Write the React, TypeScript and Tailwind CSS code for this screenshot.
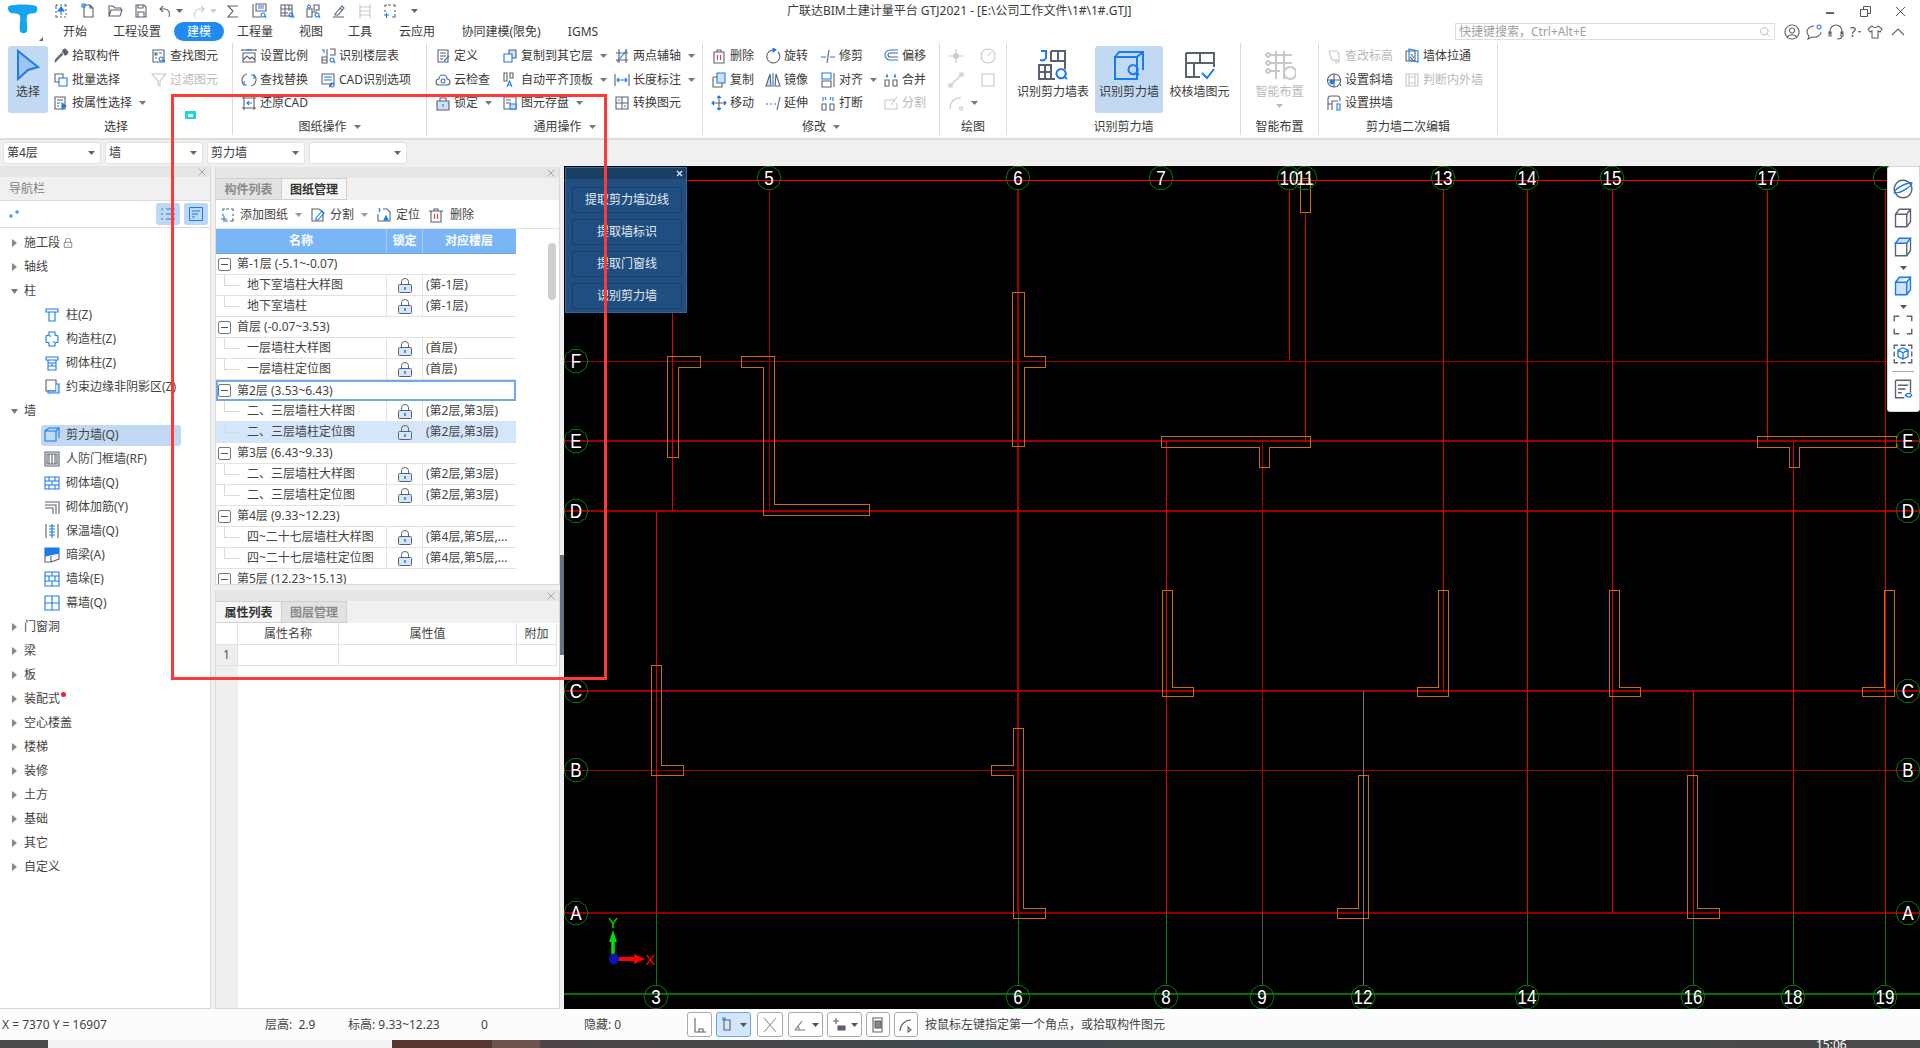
import React from 'react';

const S = '#5a6170';
const B = '#1b7be8';
const D = '#c6c8cc';
const L = '#cfe2f9';

type Seg = [string, string?, string?];
const ICONS: Record<string, Seg[]> = {
  qup: [['M3 2h2M7 2h2M11 2h2v2M13 6v2M13 10v2M13 14h-2M9 14H7M5 14H3v-2M3 10V8M3 6V4V2'], ['M8 12V6', B], ['M5 8l3-4 3 4z', B, B]],
  qnew: [['M4 2h6l3 3v9H4zM10 2v3h3'], ['M2 1h3v3H2z', B]],
  qopen: [['M2 13V3h4l2 2h6v2M2 13l2-6h11l-2 6z']],
  qsave: [['M3 2h8l2 2v10H3zM5 2v3h5V2M5 14V9h6v5']],
  undo: [['M12 14c2-4-1-8-4-8H3M6 3L3 6l3 3']],
  redo: [['M4 14c-2-4 1-8 4-8h5M10 3l3 3-3 3', D]],
  sum: [['M13 3H3l5 5-5 6h10']],
  qt1: [['M2 1v13h8M5 1h10v7H5z'], ['M7 3h6M7 5h6', B], ['M12 10a2 2 0 1 0 .1 0M14 13l1 2', B]],
  qt2: [['M2 2h11v11H2zM2 6h11M2 10h7M6 2v11M10 2v6'], ['M12 10a2 2 0 1 0 .1 0M14 13l1 2', B]],
  qt3: [['M2 6h5v8H2zM7 9h5M9 2h5v5H9z'], ['M12 10a2 2 0 1 0 .1 0M14 13l1 2', B], ['M4 2a1.5 1.5 0 1 0 .1 0', B]],
  qpen: [['M1 14h11M3 11l7-8 2 2-6 7H3z'], ['M8 5l2 2', B]],
  qgrid: [['M3 1v14M13 1v14M3 4h10M3 8h10M3 12h10', D]],
  qadd: [['M5 2H3v2M3 7v2M11 2h2v2M13 7v2M6 2h3M10 14h3v-3'], ['M2 12h5M4.500 10v5', B]],
  pick: [['M10 6l-7 7-1 1 1-3 6-6M9 3l4 4'], ['M10 2l2-1 3 3-1 2-2 1z', S, S]],
  batch: [['M2 2h8v8H2z'], ['M6 6h8v8H6z', B, '#fff']],
  prop: [['M2 2h10v12H2zM4 5h6M4 8h3M4 11h2'], ['M9 8v6l4-3z', B, B]],
  findel: [['M2 2h11v12H2zM4 5h2v2H4zM8 5h3M4 10h2'], ['M10 9a2 2 0 1 0 .1 0M12 12l2 2', B]],
  filter: [['M1 2h14L9 9v5l-2-1V9z', D]],
  scale: [['M1 2h14M1 1v2M15 1v2M2 5h12v9H2zM2 12l4-4 3 3 2-2 3 3'], ['M5 2h6', B]],
  floor: [['M2 9h5v6H2zM7 12H2M7 9V1M10 1h5v6h-5'], ['M2 2h2v3', B], ['M12 10a2 2 0 1 0 .1 0M14 13l1 2', B]],
  replace: [['M6 2A6.500 6.500 0 0 0 3 13M10 14A6.500 6.500 0 0 0 13 3'], ['M3 9v4h3M13 7V3h-3', B]],
  cad: [['M2 2h12v10H2zM9 15l3-3'], ['M4 5h8M4 8h8', B], ['M12 11a2 2 0 1 0 .1 0', B]],
  restore: [['M1 3h14M1 13h14M3 1v14M13 1v14'], ['M11 8H6M8 6L6 8l2 2', B]],
  def: [['M3 2h10v12H3zM5 5h6M5 8h6M5 11h3'], ['M9 13l5-5', B]],
  cloud: [['M4 13a3 3 0 0 1 0-6 4 4 0 0 1 8 0 3 3 0 0 1 0 6z'], ['M8 7a2 2 0 1 0 .1 0', B]],
  lock2: [['M5 6V3h6v3'], ['M2 6h12v9H2z', S, L], ['M8 9v3', B]],
  copyto: [['M7 2h7v8H7z', S, L], ['M2 6h8v8H2z', B, '#fff']],
  align: [['M2 1h3v8H2zM8 1h3v5H8z'], ['M5 15l2.500-6 2.500 6M6 13h3', B]],
  store: [['M2 2h12v12H2zM4 5h5M4 8h5'], ['M8 9h6v5H8z', B, L]],
  axis: [['M2 5h12M2 12h12M5 1v14M12 1v14'], ['M3 14L13 2', B]],
  len: [['M1 2v12M15 2v12'], ['M3 8h10M5 6L3 8l2 2M11 6l2 2-2 2', B]],
  conv: [['M2 2h12v12H2zM8 2v12M2 8h12'], ['M4 5l2 0M10 11l2 0', B]],
  del: [['M3 4h10v11H3zM6 4V2h4v2'], ['M6.500 7v5M9.500 7v5', '#e33']],
  rot: [['M8 2a6.500 6.500 0 1 0 5 2'], ['M8 0v4l3-2z', B, B]],
  trim: [['M1 9h5M10 9h5', B], ['M7 15L9 2']],
  off: [['M15 2H7a5 5 0 0 0 0 10h8', B], ['M15 5H7a2 2 0 0 0 0 4h8']],
  copy: [['M6 1h8v10H6z', B, L], ['M2 5h4M2 5v10h9v-4']],
  mir: [['M5 2L1 14h5z', S, L], ['M11 2l4 12h-5z', S], ['M8 1v14', B]],
  alignb: [['M2 1h9v6H2z', B], ['M2 9h9v6H2z', S], ['M14 1v14']],
  merge: [['M2 8h4v6H2zM10 8h4v6h-4z'], ['M4 2v3M3 4l1 1 1-1M12 2v3M11 4l1 1 1-1', B]],
  move: [['M8 2v12M2 8h12'], ['M6 3l2-2 2 2M6 13l2 2 2-2M3 6L1 8l2 2M13 6l2 2-2 2', B, B]],
  ext: [['M1 9h2M5 9h2M9 9h2', B], ['M12 15l3-13']],
  brk: [['M2 9h4v6H2zM10 9h4v6h-4z'], ['M3 2v4M6 5l-1-3M13 2v4M10 5l1-3', B]],
  split: [['M2 5h9M2 5v9h12V8M8 10l6-8', D]],
  dp: [['M8 1v14M1 8h14', D], ['M6 6h4v4H6z', D, D]],
  dc: [['M8 1a7 7 0 1 0 .1 0M8 8l3-4', D]],
  dl: [['M2 14L14 2', D], ['M1 12h3v3H1zM12 1h3v3h-3z', D]],
  dr: [['M2 2h12v12H2z', D]],
  da: [['M2 14C2 7 7 2 13 3', D], ['M13 12a1.500 1.500 0 1 0 .1 0', D]],
  cel: [['M3 3l8 0 2 3v8M3 3l3 9h6', D], ['M11 12a1.500 1.500 0 1 0 .1 0', D]],
  pull: [['M2 3h9v10H2z'], ['M5 1l9 2v11l-9-2z', B], ['M7 6l3 4M6 9l3 3', S]],
  slope: [['M8 2a6.500 6.500 0 1 0 .1 0M1.500 8h13M8 2v13'], ['M6 8a2 2 0 1 0 .1 0', B, B], ['M14 12l1 2', B]],
  inout: [['M2 2h12v12H2zM5 2v12M11 2v12M5 5h6M5 11h6', D]],
  arch: [['M2 15V4a3 3 0 0 1 3-3h6a3 3 0 0 1 3 3v2M2 9h4M6 15V6h6'], ['M11 9h3v6h-3z', B]],
  col1: [['M2 2h12v3H2zM5 5v9h6V5', B]],
  col2: [['M5 1h6v3l3 1v6l-3 1v3H5v-3l-3-1V5l3-1z', B], ['M5 5h2M9 11h2', B]],
  col3: [['M2 2h12v3H2zM4 5v10h8V5M4 8h8M4 11h8M8 8v3', B]],
  edge: [['M2 1h10v11H2z'], ['M12 5h3v9H4v-2h8', B, L]],
  wall: [['M5 1h10v10M1 4h11v10H1z', B], ['M1 4l4-3M12 4l3-3', B]],
  def2: [['M1 1h14v14H1zM5 3v10M8 3v10M11 3v10M3 3h10v10H3z']],
  brick: [['M1 2h14v12H1zM1 6h14M1 10h14M5 2v4M11 2v4M8 6v4M5 10v4M11 10v4', B]],
  rebar: [['M1 3h14v12M1 6h11v9M1 9h8v6']],
  ins: [['M2 1v14M14 1v14'], ['M5 3h6M5 6h6M5 9h6M5 12h6M8 1v14', B]],
  beam: [['M1 1h14v5L1 9z', B, B], ['M1 9v6h6l8-3V6M7 9v6']],
  buttr: [['M1 1h14v14H1zM8 1v4M1 5h14M5 5v5M1 10h14M11 5v5M8 10v5', B]],
  curtain: [['M1 1h14v14H1zM8 1v14M1 8h14M1 1', B]],
  padd: [['M5 2H3v2M3 7v2M11 2h2v2M13 7v2M6 2h3M10 14h3v-3M5 14h3'], ['M1 12h6M4 9v6', B]],
  psplit: [['M2 2h7l4 3v9H2z'], ['M6 11l6-7 2 2-6 7H6z', B]],
  ploc: [['M7 2h4l3 3v9H2V7'], ['M3 1l1 2-1 2M10 9l2 4H8z', B, B]],
  pdel: [['M3 4h10v11H3zM6 4V2h4v2M1 4h14'], ['M6.500 7v5M9.500 7v5', '#e33']],
  locknav: [['M4 7V4a4 4 0 0 1 8 0v3M2 7h12v8H2zM8 10v2']],
  search: [['M7 2a5 5 0 1 0 .1 0M11 11l3 3', '#aaa']],
  user: [['M8 1a7 7 0 1 0 .1 0M8 4a2.500 2.500 0 1 0 .1 0M3.500 13c1-3 8-3 9 0']],
  chat: [['M8 2C4 2 1 5 1 8c0 2 1 3 2 4l-1 3 4-2c5 1 9-2 9-5M5 8h.1M8 8h.1M11 8h.1'], ['M13 1a2 2 0 1 0 .1 0', B]],
  head: [['M2 10V7a6 6 0 0 1 12 0v3M1 8h2v4H1zM13 8h2v4h-2zM14 12c0 2-2 3-5 3']],
  shirt: [['M5 2L1 5l2 3 2-1v7h6V7l2 1 2-3-4-3c-1 2-5 2-6 0z']],
  up: [['M2 11l6-6 6 6']],
  sphere: [['M8 1a7 7 0 1 0 .1 0'], ['M1 11C1 8 10 3 15 3c1 2-9 9-14 8z', B]],
  cube3d: [['M2 5l3-4h9v10l-3 4H2zM2 5h9v10M11 5l3-4']],
  cubet: [['M2 5h9v10H2zM11 15l3-4V1'], ['M2 5l3-4h9l-3 4z', B, L]],
  cubeb: [['M2 5h9v10H2zM11 5l3-4v10l-3 4M2 5l3-4h9', B, L]],
  full: [['M1 5V1h4M11 1h4v4M15 11v4h-4M5 15H1v-4']],
  dash: [['M1 4V1h3M6 1h4M12 1h3v3M15 6v4M15 12v3h-3M10 15H6M4 15H1v-3M1 10V6'], ['M8 3l4 2v5l-4 2-4-2V5zM4 5l4 2 4-2M8 7v5', B]],
  viewdoc: [['M2 1h12v10M2 1v14h7M4 5h8M4 8h6M4 11h3'], ['M10 13c1.500-2 4-2 5 0-1 2-3.500 2-5 0z', B]],
  sorth: [['M3 1v14h11M7 15v-3h4v3']],
  srect: [['M3 3h6v10H3z'], ['M2 1h2v2H2z', B]],
  scross: [['M2 1l12 14M14 1L2 15', '#999']],
  sang: [['M2 13h10M2 13l7-9M6 13a5 5 0 0 0-1-4', '#777']],
  sadd: [['M1 4h6M4 1v6'], ['M6 9h7v4H6z', S, S]],
  sdoc: [['M3 1h9v14H3z'], ['M5 4h6v7H5z', S, '#888']],
  sarc: [['M2 14C2 8 7 3 13 3M13 13l-3-3v5z']],
  bigtable: [
    ['M7 1h7v9M7 1v5h7M10.500 1v5M1 15V8h6v7zM1 11.500h6M4 8v7M7 15h2', S],
    ['M2 1h2.500v3c0 1.500-1.500 2-3 1.500', B],
    ['M12 10a2.300 2.300 0 1 0 .1 0M13.500 13.500l1.500 1.500', B],
  ],
  bigwall: [
    ['M1 4h11v11H1zM1 4l2-2.500h12v9', B],
    ['M12 4l3-2.500', B],
    ['M10 8a2.300 2.300 0 1 0 .1 0M11.500 11.500L13 13', B],
  ],
  bigcheck: [
    ['M1 2h14v7M1 2v12h7M1 7h14M8 2v5M5 7v7', S],
    ['M9 12l2.500 2.500L15 10', B],
  ],
  bigsmart: [
    ['M6 1v14M10 1v14M3 3h11M3 7h11M3 11h5', D],
    ['M2 2a1 1 0 1 0 .1 0M2 6a1 1 0 1 0 .1 0M2 10a1 1 0 1 0 .1 0', D],
    ['M13 9a3 3 0 1 0 .1 0', D],
  ],
  selectArrow: [['M3 1l10 8-5 1.500L3 15z', B, '#9fc4f1']],
};

function Icon({ n, size = 16, off = false }: { n: string; size?: number; off?: boolean }) {
  const segs = ICONS[n] || [];
  return (
    <svg width={size} height={size} viewBox="0 0 16 16" fill="none" strokeWidth={size > 20 ? 1 : 1.1} className="shrink-0">
      {segs.map(([d, st = S, fl], i) => (
        <path key={i} d={d} stroke={off ? D : st} fill={fl ? (off ? D : fl) : 'none'} />
      ))}
    </svg>
  );
}

function Caret({ className = '', color = '#777' }: { className?: string; color?: string }) {
  return (
    <svg width="7" height="4" viewBox="0 0 7 4" className={`shrink-0 ${className}`}>
      <path d="M0 0h7L3.500 4z" fill={color} />
    </svg>
  );
}

function Item({ icon, text, caret, off }: { icon?: string; text?: string; caret?: boolean; off?: boolean }) {
  if (!icon) return <div />;
  return (
    <div className="flex items-center whitespace-nowrap">
      <Icon n={icon} off={off} />
      {text && <span className={`ml-[3px] ${off ? 'text-[#b9b9b9]' : 'text-[#3a3a3a]'}`}>{text}</span>}
      {caret && <Caret className="ml-[7px]" />}
    </div>
  );
}

function Group({ width, label, caret, children, last }: { width: string; label: string; caret?: boolean; children: React.ReactNode; last?: boolean }) {
  return (
    <div className={`${width} h-[92px] mt-[1px] flex flex-col shrink-0 ${last ? '' : 'border-r'} border-[#dcdcdc]`}>
      <div className="h-[75px] pt-[1px] flex">{children}</div>
      <div className="h-[17px] flex items-center justify-center text-[#3a3a3a]">
        <span>{label}</span>
        {caret && <Caret className="ml-[7px] mt-[1px]" />}
      </div>
    </div>
  );
}

function Rows({ cols, pl, items }: { cols: string; pl: string; items: { icon?: string; text?: string; caret?: boolean; off?: boolean }[] }) {
  return (
    <div className={`grid ${cols} grid-rows-[24px_23px_24px] grid-flow-col ${pl}`}>
      {items.map((it, i) => (
        <Item key={i} {...it} />
      ))}
    </div>
  );
}

function Big({ icon, text, active, off, w, caret }: { icon: string; text: string; active?: boolean; off?: boolean; w: string; caret?: boolean }) {
  return (
    <div className={`${w} h-[67px] mt-[2px] rounded-[3px] flex flex-col items-center pt-[3px] ${active ? 'bg-[#c2d9f3]' : ''}`}>
      <Icon n={icon} size={32} off={off} />
      <span className={`mt-[3px] whitespace-nowrap ${off ? 'text-[#b9b9b9]' : 'text-[#3a3a3a]'}`}>{text}</span>
      {caret && <Caret className="mt-[4px]" color="#bbb" />}
    </div>
  );
}

function TopBar() {
  const quick: { n: string; gap: string; caret?: boolean }[] = [
    { n: 'qup', gap: 'ml-[5px]' },
    { n: 'qnew', gap: 'ml-[11px]' },
    { n: 'qopen', gap: 'ml-[11px]' },
    { n: 'qsave', gap: 'ml-[10px]' },
    { n: 'undo', gap: 'ml-[8px]', caret: true },
    { n: 'redo', gap: 'ml-[8px]', caret: true },
    { n: 'sum', gap: 'ml-[8px]' },
    { n: 'qt1', gap: 'ml-[10px]' },
    { n: 'qt2', gap: 'ml-[12px]' },
    { n: 'qt3', gap: 'ml-[10px]' },
    { n: 'qpen', gap: 'ml-[11px]' },
    { n: 'qgrid', gap: 'ml-[9px]' },
    { n: 'qadd', gap: 'ml-[9px]' },
  ];
  const tabs: [string, string][] = [
    ['开始', 'w-[54px]'],
    ['工程设置', 'w-[70px]'],
    ['建模', 'w-[50px] ml-[2px] mr-[2px] h-[19px] rounded-full bg-[#1f8bf2] text-white'],
    ['工程量', 'w-[58px]'],
    ['视图', 'w-[54px]'],
    ['工具', 'w-[44px]'],
    ['云应用', 'w-[70px]'],
    ['协同建模(限免)', 'w-[98px]'],
    ['IGMS', 'w-[66px]'],
  ];
  return (
    <div className="h-[42px] flex shrink-0 bg-white">
      <div className="w-[48px] relative shrink-0">
        <svg width="48" height="42" viewBox="0 0 48 42">
          <path d="M9 6c6-2 22-2 27 0 2 1 2 6-1 7-4 1-7 0-8 3-1 4 1 10 0 15-1 3-6 3-7 0-1-5 1-11 0-15-1-3-5-2-9-3-3-1-4-6-2-7z" fill="#15a4ee" />
          <path d="M43 41h-4l4-4z" fill="#666" />
        </svg>
      </div>
      <div className="flex-1 flex flex-col">
        <div className="h-[21px] pt-[1px] flex items-center relative">
          {quick.map((q, i) => (
            <div key={i} className={`flex items-center ${q.gap}`}>
              <Icon n={q.n} />
              {q.caret && <Caret className="ml-[3px]" color={q.n === 'redo' ? '#ccc' : '#666'} />}
            </div>
          ))}
          <Caret className="ml-[13px]" color="#666" />
          <span className="ml-[369px] text-[#3a3a3a]">广联达BIM土建计量平台 GTJ2021 - [E:\公司工作文件\1#\1#.GTJ]</span>
          <div className="ml-auto flex items-center text-[#555]">
            <div className="w-[8px] h-[2px] bg-[#666] mt-[3px]" />
            <svg width="11" height="11" viewBox="0 0 11 11" className="ml-[26px]" fill="none" stroke="#555">
              <path d="M.5 3.500h7v7h-7zM3.500 3.500v-3h7v7h-3" />
            </svg>
            <svg width="11" height="11" viewBox="0 0 11 11" className="ml-[24px] mr-[14px]" fill="none" stroke="#555">
              <path d="M1 1l9 9M10 1l-9 9" />
            </svg>
          </div>
        </div>
        <div className="h-[21px] flex items-center">
          {tabs.map(([t, c]) => (
            <div key={t} className={`${c} flex items-center justify-center shrink-0 text-[#3a3a3a]`}>{t}</div>
          ))}
          <div className="ml-[839px] w-[320px] h-[17px] border border-[#dedede] flex items-center justify-between px-[3px] text-[#a0a0a0] shrink-0">
            <span>快捷键搜索，Ctrl+Alt+E</span>
            <Icon n="search" size={12} />
          </div>
          <div className="ml-[9px] flex items-center">
            <Icon n="user" />
            <span className="ml-[6px]"><Icon n="chat" /></span>
            <span className="ml-[6px]"><Icon n="head" /></span>
            <span className="ml-[6px] w-[10px] text-[14px] text-[#555] flex items-center">?<Caret color="#666" className="scale-50" /></span>
            <span className="ml-[7px]"><Icon n="shirt" /></span>
            <span className="ml-[7px]"><Icon n="up" /></span>
          </div>
        </div>
      </div>
    </div>
  );
}

function Ribbon() {
  return (
    <div className="h-[98px] flex shrink-0 bg-white border-b-2 border-[#dedede] relative">
      <Group width="w-[233px]" label="选择">
        <Big icon="selectArrow" text="选择" active w="w-[40px] ml-[8px]" />
        <Rows
          cols="grid-cols-[98px_auto]"
          pl="pl-[5px]"
          items={[
            { icon: 'pick', text: '拾取构件' },
            { icon: 'batch', text: '批量选择' },
            { icon: 'prop', text: '按属性选择', caret: true },
            { icon: 'findel', text: '查找图元' },
            { icon: 'filter', text: '过滤图元', off: true },
            {},
          ]}
        />
      </Group>
      <Group width="w-[194px]" label="图纸操作" caret>
        <Rows
          cols="grid-cols-[79px_auto]"
          pl="pl-[8px]"
          items={[
            { icon: 'scale', text: '设置比例' },
            { icon: 'replace', text: '查找替换' },
            { icon: 'restore', text: '还原CAD' },
            { icon: 'floor', text: '识别楼层表' },
            { icon: 'cad', text: 'CAD识别选项' },
            {},
          ]}
        />
      </Group>
      <Group width="w-[276px]" label="通用操作" caret>
        <Rows
          cols="grid-cols-[67px_112px_auto]"
          pl="pl-[8px]"
          items={[
            { icon: 'def', text: '定义' },
            { icon: 'cloud', text: '云检查' },
            { icon: 'lock2', text: '锁定', caret: true },
            { icon: 'copyto', text: '复制到其它层', caret: true },
            { icon: 'align', text: '自动平齐顶板', caret: true },
            { icon: 'store', text: '图元存盘', caret: true },
            { icon: 'axis', text: '两点辅轴', caret: true },
            { icon: 'len', text: '长度标注', caret: true },
            { icon: 'conv', text: '转换图元' },
          ]}
        />
      </Group>
      <Group width="w-[237px]" label="修改" caret>
        <Rows
          cols="grid-cols-[54px_55px_63px_auto]"
          pl="pl-[8px]"
          items={[
            { icon: 'del', text: '删除' },
            { icon: 'copy', text: '复制' },
            { icon: 'move', text: '移动' },
            { icon: 'rot', text: '旋转' },
            { icon: 'mir', text: '镜像' },
            { icon: 'ext', text: '延伸' },
            { icon: 'trim', text: '修剪' },
            { icon: 'alignb', text: '对齐', caret: true },
            { icon: 'brk', text: '打断' },
            { icon: 'off', text: '偏移' },
            { icon: 'merge', text: '合并' },
            { icon: 'split', text: '分割', off: true },
          ]}
        />
      </Group>
      <Group width="w-[67px]" label="绘图">
        <Rows
          cols="grid-cols-[32px_auto]"
          pl="pl-[8px]"
          items={[
            { icon: 'dp', off: true },
            { icon: 'dl', off: true },
            { icon: 'da', off: true, caret: true },
            { icon: 'dc', off: true },
            { icon: 'dr', off: true },
            {},
          ]}
        />
      </Group>
      <Group width="w-[234px]" label="识别剪力墙">
        <div className="flex pl-[10px]">
          <Big icon="bigtable" text="识别剪力墙表" w="w-[72px]" />
          <Big icon="bigwall" text="识别剪力墙" active w="w-[68px] ml-[6px]" />
          <Big icon="bigcheck" text="校核墙图元" w="w-[61px] ml-[6px]" />
        </div>
      </Group>
      <Group width="w-[78px]" label="智能布置">
        <Big icon="bigsmart" text="智能布置" off caret w="w-[78px]" />
      </Group>
      <Group width="w-[179px]" label="剪力墙二次编辑">
        <Rows
          cols="grid-cols-[78px_auto]"
          pl="pl-[7px]"
          items={[
            { icon: 'cel', text: '查改标高', off: true },
            { icon: 'slope', text: '设置斜墙' },
            { icon: 'arch', text: '设置拱墙' },
            { icon: 'pull', text: '墙体拉通' },
            { icon: 'inout', text: '判断内外墙', off: true },
            {},
          ]}
        />
      </Group>
    </div>
  );
}

function Strip() {
  const dd = ['第4层', '墙', '剪力墙', ''];
  return (
    <div className="h-[26px] bg-[#f0f0f0] flex items-center shrink-0 pl-[3px] gap-[4px]">
      {dd.map((t, i) => (
        <div key={i} className="w-[98px] h-[22px] bg-white border border-[#e2e2e2] rounded-[3px] flex items-center justify-between pl-[3px] pr-[5px] text-[#3a3a3a]">
          <span>{t}</span>
          <Caret color="#666" />
        </div>
      ))}
    </div>
  );
}

function Close() {
  return (
    <svg width="8" height="8" viewBox="0 0 8 8" fill="none" stroke="#aaa">
      <path d="M.5.5l7 7M7.500.5l-7 7" />
    </svg>
  );
}

const NAV: { t: string; lv: number; open?: boolean; icon?: string; active?: boolean; lock?: boolean; dot?: boolean }[] = [
  { t: '施工段', lv: 0, lock: true },
  { t: '轴线', lv: 0 },
  { t: '柱', lv: 0, open: true },
  { t: '柱(Z)', lv: 1, icon: 'col1' },
  { t: '构造柱(Z)', lv: 1, icon: 'col2' },
  { t: '砌体柱(Z)', lv: 1, icon: 'col3' },
  { t: '约束边缘非阴影区(Z)', lv: 1, icon: 'edge' },
  { t: '墙', lv: 0, open: true },
  { t: '剪力墙(Q)', lv: 1, icon: 'wall', active: true },
  { t: '人防门框墙(RF)', lv: 1, icon: 'def2' },
  { t: '砌体墙(Q)', lv: 1, icon: 'brick' },
  { t: '砌体加筋(Y)', lv: 1, icon: 'rebar' },
  { t: '保温墙(Q)', lv: 1, icon: 'ins' },
  { t: '暗梁(A)', lv: 1, icon: 'beam' },
  { t: '墙垛(E)', lv: 1, icon: 'buttr' },
  { t: '幕墙(Q)', lv: 1, icon: 'curtain' },
  { t: '门窗洞', lv: 0 },
  { t: '梁', lv: 0 },
  { t: '板', lv: 0 },
  { t: '装配式', lv: 0, dot: true },
  { t: '空心楼盖', lv: 0 },
  { t: '楼梯', lv: 0 },
  { t: '装修', lv: 0 },
  { t: '土方', lv: 0 },
  { t: '基础', lv: 0 },
  { t: '其它', lv: 0 },
  { t: '自定义', lv: 0 },
];

function Nav() {
  return (
    <div className="w-[211px] shrink-0 bg-white border-r border-b border-[#d8d8d8] flex flex-col">
      <div className="h-[11px] bg-[#e6e6e6] flex items-center justify-end pr-[4px] shrink-0"><Close /></div>
      <div className="h-[23px] bg-[#f0f0f0] flex items-center pl-[9px] text-[#808080] shrink-0">导航栏</div>
      <div className="h-[28px] border-y border-[#dcdcdc] flex items-center pl-[9px] pr-[2px] shrink-0">
        <svg width="10" height="10" viewBox="0 0 10 10" fill="none" stroke={B}>
          <path d="M0 7h4M2 5v4M6 3h4M8 1v4" />
        </svg>
        <div className="ml-auto w-[24px] h-[22px] bg-[#bdd7f5] rounded-[3px] flex items-center justify-center">
          <svg width="14" height="12" viewBox="0 0 14 12" fill="none" stroke={B}><path d="M0 1h2M5 1h9M0 6h2M5 6h9M0 11h2M5 11h9" /></svg>
        </div>
        <div className="ml-[4px] w-[24px] h-[22px] bg-[#bdd7f5] rounded-[3px] flex items-center justify-center">
          <svg width="14" height="14" viewBox="0 0 14 14" fill="none" stroke={B}><path d="M.5.5h13v13H.5zM3 4h8M3 7h6M3 10h3" /></svg>
        </div>
      </div>
      <div className="pt-[3px]">
        {NAV.map((r) => (
          <div key={r.t} className="h-[24px] flex items-center text-[#444] whitespace-nowrap">
            {r.lv === 0 ? (
              <>
                <div className="w-[24px] pl-[12px] shrink-0">
                  {r.open ? (
                    <svg width="7" height="5" viewBox="0 0 7 5" className="-ml-[1px]"><path d="M0 0h7L3.500 5z" fill="#777" /></svg>
                  ) : (
                    <svg width="5" height="8" viewBox="0 0 5 8"><path d="M0 0v8l5-4z" fill="#888" /></svg>
                  )}
                </div>
                <span>{r.t}</span>
                {r.lock && <span className="ml-[3px]"><Icon n="locknav" size={10} /></span>}
                {r.dot && <span className="w-[5px] h-[5px] rounded-full bg-[#e8222b] -mt-[9px] ml-[1px]" />}
              </>
            ) : (
              <div className={`ml-[41px] w-[140px] h-[21px] rounded-[3px] flex items-center pl-[3px] ${r.active ? 'bg-[#c2d9f3]' : ''}`}>
                <Icon n={r.icon!} />
                <span className="ml-[6px]">{r.t}</span>
              </div>
            )}
          </div>
        ))}
      </div>
    </div>
  );
}

const DRAW: { g?: string; n?: string; f?: string; a?: boolean; sel?: boolean }[] = [
  { g: '第-1层 (-5.1~-0.07)' },
  { n: '地下室墙柱大样图', f: '(第-1层)' },
  { n: '地下室墙柱', f: '(第-1层)' },
  { g: '首层 (-0.07~3.53)' },
  { n: '一层墙柱大样图', f: '(首层)' },
  { n: '一层墙柱定位图', f: '(首层)' },
  { g: '第2层 (3.53~6.43)', sel: true },
  { n: '二、三层墙柱大样图', f: '(第2层,第3层)' },
  { n: '二、三层墙柱定位图', f: '(第2层,第3层)', a: true },
  { g: '第3层 (6.43~9.33)' },
  { n: '二、三层墙柱大样图', f: '(第2层,第3层)' },
  { n: '二、三层墙柱定位图', f: '(第2层,第3层)' },
  { g: '第4层 (9.33~12.23)' },
  { n: '四~二十七层墙柱大样图', f: '(第4层,第5层,...' },
  { n: '四~二十七层墙柱定位图', f: '(第4层,第5层,...' },
  { g: '第5层 (12.23~15.13)' },
];

function Lock() {
  return (
    <svg width="14" height="15" viewBox="0 0 14 15" fill="none">
      <path d="M3.500 7V3.500a3.500 3 0 0 1 7 0V7" stroke={S} />
      <rect x=".5" y="6.500" width="13" height="8" rx="1" fill="#d6e6fb" stroke={S} />
      <path d="M7 9v3" stroke={B} strokeWidth="1.500" />
    </svg>
  );
}

function Tabs({ a, b, first }: { a: string; b: string; first: boolean }) {
  const on = 'bg-[#f6f6f6] text-[#333] border-[#d0d0d0]';
  const offc = 'bg-[#e2e2e2] text-[#8a8a8a] border-[#d0d0d0]';
  return (
    <div className="h-[22px] bg-[#f0f0f0] flex shrink-0 font-bold">
      <div className={`w-[66px] pt-[1px] border-y border-r flex items-center justify-center ${first ? on : offc}`}>{a}</div>
      <div className={`w-[65px] pt-[1px] border-y border-r flex items-center justify-center ${first ? offc : on}`}>{b}</div>
    </div>
  );
}

function Middle() {
  return (
    <div className="w-[345px] ml-[4px] shrink-0 flex flex-col">
      <div className="h-[418px] bg-white border-x border-b border-[#d8d8d8] flex flex-col shrink-0 overflow-hidden mt-[1px]">
        <div className="h-[11px] bg-[#e6e6e6] flex items-center justify-end pr-[4px] shrink-0"><Close /></div>
        <Tabs a="构件列表" b="图纸管理" first={false} />
        <div className="h-[29px] pt-[1px] border-b border-[#e2e2e2] flex items-center pl-[4px] text-[#444] shrink-0">
          <Icon n="padd" />
          <span className="ml-[4px]">添加图纸</span>
          <Caret className="ml-[7px]" color="#999" />
          <span className="ml-[8px]"><Icon n="psplit" /></span>
          <span className="ml-[4px]">分割</span>
          <Caret className="ml-[7px]" color="#999" />
          <span className="ml-[8px]"><Icon n="ploc" /></span>
          <span className="ml-[4px]">定位</span>
          <span className="ml-[8px]"><Icon n="pdel" /></span>
          <span className="ml-[6px]">删除</span>
        </div>
        <div className="flex-1 flex min-h-0 relative">
          <div className="w-[300px] shrink-0">
            <div className="h-[25px] bg-[#7ab6f6] text-white font-bold grid grid-cols-[170px_36px_93px] border-b border-[#6aa8ea]">
              <div className="flex items-center justify-center">名称</div>
              <div className="flex items-center justify-center border-l border-[#a7cdf7]">锁定</div>
              <div className="flex items-center justify-center border-l border-[#a7cdf7]">对应楼层</div>
            </div>
            {DRAW.map((r, i) =>
              r.g ? (
                <div key={i} className={`h-[21px] flex items-center text-[#444] ${r.sel ? 'border-2 border-[#6fa9e6]' : 'border-b border-[#e2e2e2]'}`}>
                  <div className={`w-[13px] h-[13px] border border-[#777] rounded-[2px] flex items-center justify-center shrink-0 ${r.sel ? 'ml-[0px]' : 'ml-[2px]'}`}>
                    <div className="w-[7px] h-[1px] bg-[#555]" />
                  </div>
                  <span className="ml-[6px] whitespace-nowrap">{r.g}</span>
                </div>
              ) : (
                <div key={i} className={`h-[21px] grid grid-cols-[170px_36px_93px] border-b border-[#e2e2e2] text-[#444] ${r.a ? 'bg-[#d3e6fb]' : ''}`}>
                  <div className="flex items-center relative pl-[31px] whitespace-nowrap">
                    <div className="absolute left-[8px] top-[10px] w-[16px] h-[1px] bg-[#dcdcdc]" />
                    <div className="absolute left-[8px] top-0 w-[1px] h-[11px] bg-[#dcdcdc]" />
                    {r.n}
                  </div>
                  <div className="flex items-center justify-center border-l border-[#e2e2e2]"><Lock /></div>
                  <div className="flex items-center pl-[3px] border-l border-[#e2e2e2] whitespace-nowrap">{r.f}</div>
                </div>
              ),
            )}
          </div>
          <div className="w-[8px] h-[57px] rounded-full bg-[#cfcfcf] ml-[32px] mt-[14px]" />
        </div>
      </div>
      <div className="flex-1 mt-[5px] bg-white border-x border-b border-[#d8d8d8] flex flex-col">
        <div className="h-[11px] bg-[#e6e6e6] flex items-center justify-end pr-[4px] shrink-0"><Close /></div>
        <Tabs a="属性列表" b="图层管理" first />
        <div className="flex-1 flex">
          <div className="w-[22px] bg-[#efefef] flex flex-col shrink-0">
            <div className="h-[22px] bg-white border-b border-r border-[#e2e2e2]" />
            <div className="h-[21px] border-b border-r border-[#e2e2e2] flex items-center justify-center text-[#555]">1</div>
          </div>
          <div className="w-[319px] h-[43px] grid grid-cols-[101px_178px_40px] grid-rows-[22px_21px] text-[#444]">
            <div className="border-b border-r border-[#e2e2e2] flex items-center justify-center">属性名称</div>
            <div className="border-b border-r border-[#e2e2e2] flex items-center justify-center">属性值</div>
            <div className="border-b border-r border-[#e2e2e2] flex items-center justify-center">附加</div>
            <div className="border-b border-r border-[#e2e2e2]" />
            <div className="border-b border-r border-[#e2e2e2]" />
            <div className="border-b border-r border-[#e2e2e2]" />
          </div>
        </div>
      </div>
    </div>
  );
}

type Ln = [number, number, number, string, number];
const DR = '#a00000';
const RR = '#d80000';
const GR = '#0b7a0b';
const VL: Ln[] = [
  [656, 511, 913, RR, 1], [656, 913, 985, GR, 1],
  [672, 313, 511, RR, 1],
  [769, 190, 511, DR, 1],
  [1018, 190, 913, DR, 2], [1018, 913, 985, GR, 1],
  [1166, 441, 913, RR, 1], [1166, 913, 985, GR, 1],
  [1262, 441, 913, DR, 1], [1262, 913, 985, '#555', 1],
  [1289, 190, 361, RR, 1],
  [1305, 212, 441, RR, 1],
  [1363, 691, 985, '#777', 1],
  [1443, 190, 691, RR, 1],
  [1527, 190, 913, RR, 1], [1527, 913, 985, GR, 1],
  [1612, 190, 913, RR, 1],
  [1693, 691, 913, RR, 1], [1693, 913, 985, GR, 1],
  [1767, 190, 441, RR, 1],
  [1793, 441, 913, RR, 1], [1793, 913, 985, GR, 1],
  [1885, 190, 913, RR, 1], [1885, 913, 985, GR, 1],
];
const HL: [number, string, number][] = [
  [180, '#ff0000', 1],
  [361, DR, 1],
  [441, DR, 2],
  [511, DR, 2],
  [691, DR, 2],
  [770, DR, 1],
  [913, '#900000', 2],
  [994, '#0a6a0a', 2],
];
const WALLS = [
  '667,356 700,356 700,367 678,367 678,457 667,457',
  '741,356 774,356 774,504 869,504 869,515 763,515 763,367 741,367',
  '1012,292 1024,292 1024,356 1045,356 1045,367 1024,367 1024,446 1012,446',
  '1300,178 1310,178 1310,212 1300,212',
  '1161,436 1310,436 1310,447 1269,447 1269,467 1259,467 1259,447 1161,447',
  '1757,436 1896,436 1896,447 1799,447 1799,467 1789,467 1789,447 1757,447',
  '1162,590 1172,590 1172,687 1193,687 1193,696 1162,696',
  '1438,590 1448,590 1448,696 1417,696 1417,687 1438,687',
  '1609,590 1619,590 1619,687 1640,687 1640,696 1609,696',
  '1884,590 1894,590 1894,696 1862,696 1862,687 1884,687',
  '651,665 661,665 661,765 683,765 683,775 651,775',
  '1013,728 1023,728 1023,908 1045,908 1045,918 1013,918 1013,775 991,775 991,765 1013,765',
  '1358,775 1368,775 1368,918 1337,918 1337,908 1358,908',
  '1687,775 1697,775 1697,908 1719,908 1719,918 1687,918',
];
const LABELS: [string, number, number][] = [
  ['5', 769, 178], ['6', 1018, 178], ['7', 1161, 178], ['10', 1289, 178], ['11', 1305, 178], ['13', 1443, 178], ['14', 1527, 178], ['15', 1612, 178], ['17', 1767, 178], ['', 1885, 178],
  ['3', 656, 997], ['6', 1018, 997], ['8', 1166, 997], ['9', 1262, 997], ['12', 1363, 997], ['14', 1527, 997], ['16', 1693, 997], ['18', 1793, 997], ['19', 1885, 997],
  ['F', 576, 361], ['E', 576, 441], ['D', 576, 511], ['C', 576, 691], ['B', 576, 770], ['A', 576, 913],
  ['E', 1908, 441], ['D', 1908, 511], ['C', 1908, 691], ['B', 1908, 770], ['A', 1908, 913],
];

function ngon(cx: number, cy: number, r: number) {
  const p: string[] = [];
  for (let i = 0; i < 10; i++) {
    const a = (i * Math.PI) / 5;
    p.push(`${(cx + r * Math.cos(a)).toFixed(1)},${(cy + r * Math.sin(a)).toFixed(1)}`);
  }
  return p.join(' ');
}

function Canvas() {
  const btns = ['提取剪力墙边线', '提取墙标识', '提取门窗线', '识别剪力墙'];
  const tools: (string | null)[] = ['sphere', 'cube3d', 'cubet', null, 'cubeb', null, 'full', 'dash'];
  return (
    <div className="relative flex-1 bg-black overflow-hidden">
      <svg width="1356" height="843" viewBox="564 166 1356 843" className="block" fontFamily="'Liberation Sans', sans-serif">
        <g shapeRendering="crispEdges">
          {HL.map(([y, c, w]) => (
            <line key={y} x1="564" x2="1920" y1={y} y2={y} stroke={c} strokeWidth={w} />
          ))}
          {VL.map(([x, a, b, c, w], i) => (
            <line key={i} x1={x} x2={x} y1={a} y2={b} stroke={c} strokeWidth={w} />
          ))}
          {WALLS.map((p, i) => (
            <polygon key={i} points={p} fill="none" stroke="#c87000" strokeWidth="1" />
          ))}
        </g>
        {LABELS.map(([t, x, y], i) => (
          <g key={i}>
            <polygon points={ngon(x, y, 12)} fill="none" stroke="#0a7a0a" strokeWidth="1" />
            <text transform={`translate(${x} ${y + 7}) scale(.85 1)`} textAnchor="middle" fontSize="20" fill="#fff">{t}</text>
          </g>
        ))}
        <path d="M613 959V941" stroke="#00e000" strokeWidth="3.500" />
        <path d="M613 930l-4 12h8z" fill="#00e000" />
        <path d="M615 959h20" stroke="#f00" strokeWidth="4" />
        <path d="M645 959l-11-5v10z" fill="#f00" />
        <ellipse cx="614" cy="959" rx="5" ry="5.500" fill="#0a14b0" />
        <text x="613" y="928" textAnchor="middle" fontSize="15" fill="#00e000">Y</text>
        <text x="650" y="965" textAnchor="middle" fontSize="15" fill="#f00">X</text>
      </svg>
      <div className="absolute left-[1px] top-[1px] w-[122px] h-[146px] bg-[#204e80] border border-[#2c68a8] flex flex-col">
        <div className="h-[11px] bg-[#1b3f63] flex items-center justify-end pr-[3px] shrink-0">
          <svg width="7" height="7" viewBox="0 0 7 7" fill="none" stroke="#dfe8f2" strokeWidth="1.300"><path d="M1 1l5 5M6 1l-5 5" /></svg>
        </div>
        <div className="flex flex-col gap-[6px] pl-[6px] pt-[8px]">
          {btns.map((b) => (
            <div key={b} className="w-[110px] h-[26px] border border-[#1a3d63] flex items-center justify-center text-[#e4ecf4] bg-[#204e80]">{b}</div>
          ))}
        </div>
      </div>
      <div className="absolute right-0 top-0 w-[33px] h-[246px] bg-white rounded-l-[3px] rounded-b-[3px] border border-[#d8d8d8] flex flex-col items-center pt-[12px] pr-[1px]">
        {tools.map((t, i) =>
          t ? (
            <div key={i} className="h-[20px] mb-[9px]"><Icon n={t} size={20} /></div>
          ) : (
            <Caret key={i} className="mb-[6px]" color="#555" />
          ),
        )}
        <div className="w-[22px] h-[1px] bg-[#aaa] -mt-[2px] mb-[7px]" />
        <Icon n="viewdoc" size={20} />
      </div>
    </div>
  );
}

function Status() {
  const box = 'h-[25px] rounded-[3px] border border-[#aaa] flex items-center justify-center bg-white gap-[3px]';
  return (
    <div className="h-[31px] bg-[#fcfcfc] flex items-center shrink-0 text-[#444] whitespace-nowrap pl-[2px]">
      <span className="w-[263px]">X = 7370 Y = 16907</span>
      <span className="w-[83px]">层高:&nbsp;&nbsp;2.9</span>
      <span className="w-[133px]">标高:&nbsp;9.33~12.23</span>
      <span className="w-[103px]">0</span>
      <span className="w-[103px]">隐藏:&nbsp;0</span>
      <div className={`${box} w-[25px]`}><Icon n="sorth" /></div>
      <div className="h-[25px] rounded-[3px] border border-[#6ba5e8] flex items-center justify-center bg-[#d4e6fb] gap-[3px] w-[35px] ml-[4px]"><Icon n="srect" /><Caret color="#555" /></div>
      <div className={`${box} w-[26px] ml-[6px]`}><Icon n="scross" /></div>
      <div className={`${box} w-[35px] ml-[5px]`}><Icon n="sang" /><Caret color="#555" /></div>
      <div className={`${box} w-[35px] ml-[4px]`}><Icon n="sadd" /><Caret color="#555" /></div>
      <div className={`${box} w-[24px] ml-[4px]`}><Icon n="sdoc" /></div>
      <div className={`${box} w-[24px] ml-[4px]`}><Icon n="sarc" /></div>
      <span className="ml-[7px]">按鼠标左键指定第一个角点，或拾取构件图元</span>
    </div>
  );
}

function Taskbar() {
  return (
    <div className="h-[8px] shrink-0 flex bg-gradient-to-r from-[#5a3a38] via-[#3f4a4e] to-[#4a4a4a] overflow-hidden relative">
      <div className="w-[48px] bg-[#4b4b4b]" />
      <div className="w-[344px] bg-[#f2f2f2]" />
      <div className="w-[100px] bg-[#5a3632]" />
      <div className="w-[48px] bg-[#6d5350]" />
      <span className="ml-[1276px] text-[12px] leading-[16px] text-white mt-[-3px]">15:06</span>
    </div>
  );
}

export default function App() {
  return (
    <div className="relative w-[1920px] h-[1048px] overflow-hidden flex flex-col bg-[#f0f0f0] text-[12px] leading-[16px] font-['Noto_Sans','Noto_Sans_CJK_SC',sans-serif]">
      <TopBar />
      <Ribbon />
      <Strip />
      <div className="flex-1 flex min-h-0">
        <Nav />
        <Middle />
        <div className="w-[4px] flex items-center shrink-0">
          <div className="w-[4px] h-[100px] bg-[#667380] mt-[34px]" />
        </div>
        <Canvas />
      </div>
      <Status />
      <Taskbar />
      <div className="absolute left-[185px] top-[111px] w-[11px] h-[8px] bg-[#1fd8d8] flex items-center justify-center">
        <div className="w-[5px] h-[3px] bg-white" />
      </div>
      <div className="absolute left-[171px] top-[94px] w-[436px] h-[586px] border-[3px] border-[#ff3838] pointer-events-none" />
    </div>
  );
}
